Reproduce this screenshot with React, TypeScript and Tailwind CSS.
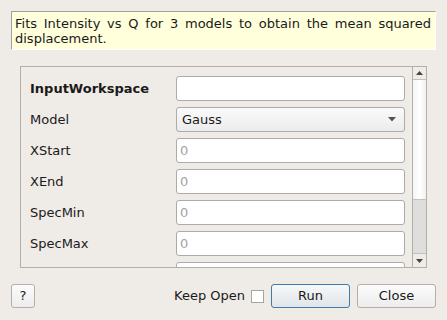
import React from "react";

const font = { fontFamily: '"DejaVu Sans", sans-serif' };

function Field({ value }: { value?: string }) {
  return (
    <div className="w-[229px] h-[25px] rounded-[3px] border border-[#ababab] bg-white flex items-center pl-[3px] text-[13px] text-[#a3a3a3]">
      {value}
    </div>
  );
}

function Combo() {
  return (
    <div className="w-[229px] h-[25px] rounded-[3px] border border-[#ababab] bg-gradient-to-b from-[#fafafa] to-[#ececec] flex items-center pl-[5px] pr-[8px] text-[13px] text-[#1a1a1a]">
      <span className="flex-1">Gauss</span>
      <svg width="8" height="5" viewBox="0 0 8 5">
        <polygon points="0,0 8,0 4,4.5" fill="#555" />
      </svg>
    </div>
  );
}

function Row({ label, bold, children }: { label: string; bold?: boolean; children: React.ReactNode }) {
  return (
    <div className="flex items-center h-[25px] shrink-0">
      <div className={`w-[146px] text-[13px] text-[#1a1a1a] ${bold ? "font-bold" : ""}`}>{label}</div>
      {children}
    </div>
  );
}

export default function App() {
  return (
    <div
      className="w-[447px] h-[320px] bg-[#efebe7] flex flex-col px-[11px] pt-[11px] overflow-hidden"
      style={font}
    >
      <div className="h-[39px] shrink-0 bg-[#ffffdc] border-t border-l border-t-[#a0a0a0] border-l-[#a0a0a0] border-r border-b border-r-white border-b-white pl-[3px] pr-[4px] pt-[4px] text-[13px] leading-[15px] text-[#1a1a1a]">
        <div className="whitespace-nowrap">
          <span className="flex justify-between">
            {"Fits Intensity vs Q for 3 models to obtain the mean squared".split(" ").map((w, i) => (
              <span key={i}>{w}</span>
            ))}
          </span>
        </div>
        <div>displacement.</div>
      </div>

      <div className="mt-[16px] mx-[9px] h-[202px] shrink-0 border border-[#b3b0ac] flex overflow-hidden">
        <div className="flex-1 overflow-hidden pl-[9px] pt-[9px] flex flex-col gap-[6px]">
          <Row label="InputWorkspace" bold>
            <Field />
          </Row>
          <Row label="Model">
            <Combo />
          </Row>
          <Row label="XStart">
            <Field value="0" />
          </Row>
          <Row label="XEnd">
            <Field value="0" />
          </Row>
          <Row label="SpecMin">
            <Field value="0" />
          </Row>
          <Row label="SpecMax">
            <Field value="0" />
          </Row>
          <Row label="">
            <Field />
          </Row>
        </div>
        <div className="w-[14px] border-l border-[#b3b0ac] flex flex-col bg-[#efebe7]">
          <div className="h-[13px] border-b border-[#c4c1bd] flex items-center justify-center">
            <svg width="7" height="4" viewBox="0 0 7 4">
              <polygon points="0,4 7,4 3.5,0" fill="#444" />
            </svg>
          </div>
          <div className="h-[120px] bg-gradient-to-r from-[#f4f4f4] via-white to-[#f0f0f0] border-b border-[#c4c1bd]" />
          <div className="flex-1 bg-[#dfdedc]" />
          <div className="h-[14px] border-t border-[#c4c1bd] flex items-center justify-center">
            <svg width="7" height="4" viewBox="0 0 7 4">
              <polygon points="0,0 7,0 3.5,4" fill="#444" />
            </svg>
          </div>
        </div>
      </div>

      <div className="mt-[16px] h-[24px] shrink-0 flex items-center">
        <div className="w-[24px] h-[24px] rounded-[3px] border border-[#b3b0ac] bg-gradient-to-b from-[#fbfbfb] to-[#ededed] flex items-center justify-center text-[13px] text-[#1a1a1a]">
          ?
        </div>
        <div className="flex-1" />
        <span className="text-[13px] text-[#1a1a1a]">Keep Open</span>
        <div className="ml-[6px] w-[13px] h-[13px] border border-[#a8a5a1] bg-white" />
        <div className="ml-[7px] w-[79px] h-[24px] rounded-[3px] border border-[#3f7bab] bg-gradient-to-b from-[#f6f7f8] to-[#e1e5e9] flex items-center justify-center text-[13px] text-[#1a1a1a]">
          Run
        </div>
        <div className="ml-[7px] w-[79px] h-[24px] rounded-[3px] border border-[#b3b0ac] bg-gradient-to-b from-[#fbfbfb] to-[#ededed] flex items-center justify-center text-[13px] text-[#1a1a1a]">
          Close
        </div>
      </div>
    </div>
  );
}
